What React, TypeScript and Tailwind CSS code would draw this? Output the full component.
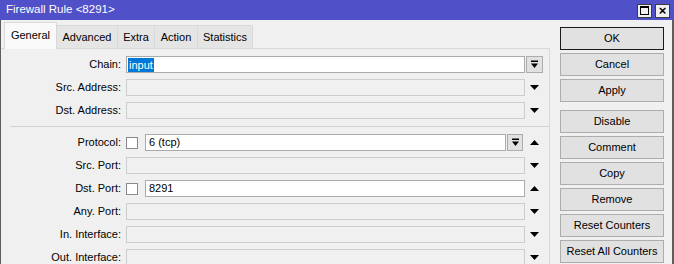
import React from "react";

const DropIcon = () => (
  <svg width="9" height="9" viewBox="0 0 9 9" fill="#000">
    <rect x="1" y="0.5" width="7" height="1.5" />
    <path d="M1 3.5h7l-3.5 4.5z" />
  </svg>
);

const Arrow = ({ up }: { up?: boolean }) => (
  <svg width="9" height="5" viewBox="0 0 9 5" fill="#000">
    {up ? <path d="M0 5h9L4.5 0z" /> : <path d="M0 0h9L4.5 5z" />}
  </svg>
);

const Label = ({ text }: { text: string }) => (
  <div className="w-[121px] shrink-0 pr-[1px] text-right">{text}</div>
);

const Row = ({
  label,
  children,
  control,
}: {
  label: string;
  children: React.ReactNode;
  control?: React.ReactNode;
}) => (
  <div className="flex h-[17px] items-center">
    <Label text={label} />
    <div className="ml-[4px] flex h-full w-[399px] items-center">{children}</div>
    <div className="ml-[1px] flex h-full w-[17px] items-center justify-center">{control}</div>
  </div>
);

const Empty = () => <div className="h-full flex-1 border border-[#cdcdcd] bg-[#f0f0f0]" />;

const Check = () => <div className="h-[12px] w-[12px] shrink-0 border border-[#8a8a8a] bg-white" />;

const tabs = [
  { name: "Advanced", w: "w-[62px]" },
  { name: "Extra", w: "w-[38px]" },
  { name: "Action", w: "w-[44px]" },
  { name: "Statistics", w: "w-[56px]" },
];

const buttons = ["Disable", "Comment", "Copy", "Remove", "Reset Counters", "Reset All Counters"];

const Btn = ({ text, focus }: { text: string; focus?: boolean }) => (
  <div
    className={`flex h-[23px] w-[104px] items-center justify-center bg-[#e1e1e1] ${
      focus ? "border border-[#1a1a1a]" : "border border-[#adadad]"
    }`}
  >
    {text}
  </div>
);

export default function App() {
  return (
    <div className="flex h-[264px] w-[674px] flex-col overflow-hidden bg-[#f0f0f0] font-['Liberation_Sans',Arial,sans-serif] text-[11px] text-black">
      {/* Title bar */}
      <div className="flex h-[20px] shrink-0 items-center bg-[#5050c8] pl-[6px] pr-[4px] text-white">
        <span className="flex-1 text-[11.5px]">Firewall Rule &lt;8291&gt;</span>
        <div className="flex gap-[3px] pt-[1px]">
          <div className="flex h-[14px] w-[15px] items-center justify-center border border-[#3c3c3c] bg-[#f0f0f0]">
            <div className="h-[9px] w-[9px] border border-t-2 border-black" />
          </div>
          <div className="flex h-[14px] w-[15px] items-center justify-center border border-[#3c3c3c] bg-[#f0f0f0] text-[13px] font-bold leading-none text-black">
            ×
          </div>
        </div>
      </div>

      {/* Body */}
      <div className="flex flex-1 border-l border-r-2 border-[#5e5e5e]">
        {/* Left: tabs + form */}
        <div className="flex w-[549px] shrink-0 flex-col">
          <div className="flex h-[28px] items-end pl-[3px]">
            <div className="relative z-10 -mb-px flex h-[27px] w-[53px] items-center justify-center border border-b-0 border-[#d9d9d9] bg-[#f9f9f9] pb-[2px]">
              General
            </div>
            {tabs.map((t) => (
              <div
                key={t.name}
                className={`-ml-px flex h-[23px] ${t.w} items-center justify-center border border-b-0 border-[#d9d9d9] bg-[#e5e5e5]`}
              >
                {t.name}
              </div>
            ))}
          </div>
          <div className="flex flex-1 flex-col gap-[6px] border-t border-r border-[#d9d9d9] pt-[7px]">
            <Row
              label="Chain:"
              control={
                <div className="flex h-[17px] w-[17px] items-center justify-center border border-[#adadad] bg-[#e1e1e1]">
                  <DropIcon />
                </div>
              }
            >
              <div className="flex h-full flex-1 items-center border border-[#ababab] bg-white pl-[1px]">
                <span className="bg-[#0078d7] px-[1px] leading-[14px] text-white">input</span>
              </div>
            </Row>
            <Row label="Src. Address:" control={<Arrow />}>
              <Empty />
            </Row>
            <Row label="Dst. Address:" control={<Arrow />}>
              <Empty />
            </Row>
            <div className="my-px ml-[9px] h-px bg-[#d0d0d0]" />
            <Row label="Protocol:" control={<Arrow up />}>
              <Check />
              <div className="ml-[7px] flex h-full flex-1 items-center border border-[#ababab] bg-white pl-[3px]">
                6 (tcp)
              </div>
              <div className="ml-px mr-[2px] flex h-[17px] w-[16px] items-center justify-center border border-[#adadad] bg-[#e1e1e1]">
                <DropIcon />
              </div>
            </Row>
            <Row label="Src. Port:" control={<Arrow />}>
              <Empty />
            </Row>
            <Row label="Dst. Port:" control={<Arrow up />}>
              <Check />
              <div className="ml-[7px] flex h-full flex-1 items-center border border-[#ababab] bg-white pl-[3px]">
                8291
              </div>
            </Row>
            <Row label="Any. Port:" control={<Arrow />}>
              <Empty />
            </Row>
            <Row label="In. Interface:" control={<Arrow />}>
              <Empty />
            </Row>
            <Row label="Out. Interface:" control={<Arrow />}>
              <Empty />
            </Row>
          </div>
        </div>

        {/* Right: buttons */}
        <div className="ml-[10px] flex flex-col gap-[3px] pt-[7px]">
          <Btn text="OK" focus />
          <Btn text="Cancel" />
          <Btn text="Apply" />
          <div className="h-[2px]" />
          {buttons.map((b) => (
            <Btn key={b} text={b} />
          ))}
        </div>
      </div>
    </div>
  );
}
